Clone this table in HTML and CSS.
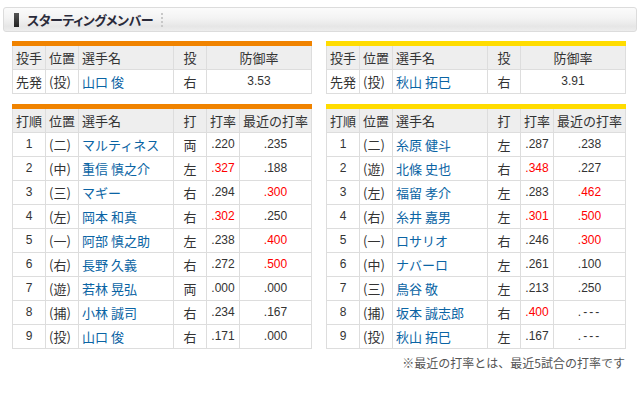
FILE: index.html
```html
<!DOCTYPE html>
<html lang="ja">
<head>
<meta charset="utf-8">
<title>スターティングメンバー</title>
<link rel="stylesheet" href="styles.css">
</head>
<body>
<div class="page">
  <div class="title-bar">
    <span class="mark"></span>
    <h2 class="title">スターティングメンバー</h2>
    <span class="sep"></span>
  </div>

  <div class="teams">
    <div class="team team-home">
      <table class="grid pitcher">
        <colgroup><col class="c1"><col class="c2"><col class="c3"><col class="c4"><col></colgroup>
        <tr class="head"><th class="l">投手</th><th class="l">位置</th><th class="l">選手名</th><th>投</th><th>防御率</th></tr>
        <tr><td class="l">先発</td><td class="l">(投)</td><td class="l"><a>山口 俊</a></td><td class="jp">右</td><td class="num">3.53</td></tr>
      </table>
      <table class="grid order">
        <colgroup><col class="c1"><col class="c2"><col class="c3"><col class="c4"><col class="c5"><col></colgroup>
        <tr class="head"><th class="l">打順</th><th class="l">位置</th><th class="l">選手名</th><th>打</th><th>打率</th><th>最近の打率</th></tr>
        <tr><td class="num">1</td><td class="l">(二)</td><td class="l"><a>マルティネス</a></td><td class="jp">両</td><td class="num">.220</td><td class="num">.235</td></tr>
        <tr><td class="num">2</td><td class="l">(中)</td><td class="l"><a>重信 慎之介</a></td><td class="jp">左</td><td class="num hot">.327</td><td class="num">.188</td></tr>
        <tr><td class="num">3</td><td class="l">(三)</td><td class="l"><a>マギー</a></td><td class="jp">右</td><td class="num">.294</td><td class="num hot">.300</td></tr>
        <tr><td class="num">4</td><td class="l">(左)</td><td class="l"><a>岡本 和真</a></td><td class="jp">右</td><td class="num hot">.302</td><td class="num">.250</td></tr>
        <tr><td class="num">5</td><td class="l">(一)</td><td class="l"><a>阿部 慎之助</a></td><td class="jp">左</td><td class="num">.238</td><td class="num hot">.400</td></tr>
        <tr><td class="num">6</td><td class="l">(右)</td><td class="l"><a>長野 久義</a></td><td class="jp">右</td><td class="num">.272</td><td class="num hot">.500</td></tr>
        <tr><td class="num">7</td><td class="l">(遊)</td><td class="l"><a>若林 晃弘</a></td><td class="jp">両</td><td class="num">.000</td><td class="num">.000</td></tr>
        <tr><td class="num">8</td><td class="l">(捕)</td><td class="l"><a>小林 誠司</a></td><td class="jp">右</td><td class="num">.234</td><td class="num">.167</td></tr>
        <tr><td class="num">9</td><td class="l">(投)</td><td class="l"><a>山口 俊</a></td><td class="jp">右</td><td class="num">.171</td><td class="num">.000</td></tr>
      </table>
    </div>

    <div class="team team-away">
      <table class="grid pitcher">
        <colgroup><col class="c1"><col class="c2"><col class="c3"><col class="c4"><col></colgroup>
        <tr class="head"><th class="l">投手</th><th class="l">位置</th><th class="l">選手名</th><th>投</th><th>防御率</th></tr>
        <tr><td class="l">先発</td><td class="l">(投)</td><td class="l"><a>秋山 拓巳</a></td><td class="jp">右</td><td class="num">3.91</td></tr>
      </table>
      <table class="grid order">
        <colgroup><col class="c1"><col class="c2"><col class="c3"><col class="c4"><col class="c5"><col></colgroup>
        <tr class="head"><th class="l">打順</th><th class="l">位置</th><th class="l">選手名</th><th>打</th><th>打率</th><th>最近の打率</th></tr>
        <tr><td class="num">1</td><td class="l">(二)</td><td class="l"><a>糸原 健斗</a></td><td class="jp">左</td><td class="num">.287</td><td class="num">.238</td></tr>
        <tr><td class="num">2</td><td class="l">(遊)</td><td class="l"><a>北條 史也</a></td><td class="jp">右</td><td class="num hot">.348</td><td class="num">.227</td></tr>
        <tr><td class="num">3</td><td class="l">(左)</td><td class="l"><a>福留 孝介</a></td><td class="jp">左</td><td class="num">.283</td><td class="num hot">.462</td></tr>
        <tr><td class="num">4</td><td class="l">(右)</td><td class="l"><a>糸井 嘉男</a></td><td class="jp">左</td><td class="num hot">.301</td><td class="num hot">.500</td></tr>
        <tr><td class="num">5</td><td class="l">(一)</td><td class="l"><a>ロサリオ</a></td><td class="jp">右</td><td class="num">.246</td><td class="num hot">.300</td></tr>
        <tr><td class="num">6</td><td class="l">(中)</td><td class="l"><a>ナバーロ</a></td><td class="jp">左</td><td class="num">.261</td><td class="num">.100</td></tr>
        <tr><td class="num">7</td><td class="l">(三)</td><td class="l"><a>鳥谷 敬</a></td><td class="jp">左</td><td class="num">.213</td><td class="num">.250</td></tr>
        <tr><td class="num">8</td><td class="l">(捕)</td><td class="l"><a>坂本 誠志郎</a></td><td class="jp">右</td><td class="num hot">.400</td><td class="num dash">.---</td></tr>
        <tr><td class="num">9</td><td class="l">(投)</td><td class="l"><a>秋山 拓巳</a></td><td class="jp">左</td><td class="num">.167</td><td class="num dash">.---</td></tr>
      </table>
    </div>
  </div>

  <p class="note">※最近の打率とは、最近5試合の打率です</p>
</div>
</body>
</html>
```

FILE: styles.css
```css
html, body {
  margin: 0;
  padding: 0;
  background: #fff;
}

body {
  font-family: "Noto Sans CJK JP", "Noto Sans", sans-serif;
  color: #333;
}

.page {
  width: 634px;
  padding: 7px 0 0 3px;
}

/* ---- title bar ---- */
.title-bar {
  display: flex;
  align-items: center;
  height: 23px;
  border: 1px solid #dcdcdc;
  border-radius: 3px;
  background: linear-gradient(#fbfbfb 0%, #f3f3f3 45%, #e6e6e6 80%, #ededed 100%);
  padding-left: 10px;
}

.mark {
  width: 5px;
  height: 14px;
  background: linear-gradient(#555, #222);
}

.title {
  margin: 0 0 0 8px;
  font-size: 13px;
  font-weight: bold;
  line-height: 23px;
  color: #2a2a3a;
  letter-spacing: -0.5px;
  font-feature-settings: "palt";
}

.sep {
  margin-left: 8px;
  height: 14px;
  border-left: 2px dotted #c8c8c8;
}

/* ---- tables ---- */
.teams {
  display: grid;
  grid-template-columns: 300px 300px;
  column-gap: 14px;
  margin: 9px 0 0 9px;
}

.team {
  display: flex;
  flex-direction: column;
  gap: 10px;
}

.grid {
  width: 300px;
  table-layout: fixed;
  border-collapse: collapse;
  font-size: 13px;
}

.team-home .grid { border-top: 5px solid #f08300; }
.team-away .grid { border-top: 5px solid #ffdc00; }

.grid col.c1,
.grid col.c2,
.grid col.c4,
.grid col.c5 { width: 33px; }
.grid col.c3 { width: 95px; }

.grid th,
.grid td {
  border: 1px solid #dddddd;
  padding: 0 3px;
  height: 23px;
  line-height: 23px;
  text-align: center;
  white-space: nowrap;
  overflow: hidden;
  font-weight: normal;
}

.grid tr:first-child th { border-top: 0; }

.grid th {
  background: #eeeeee;
}

.grid .l { text-align: left; }

.grid .num {
  font-family: "Liberation Sans", "Noto Sans", sans-serif;
  font-size: 12px;
  color: #333;
}

.grid .dash { letter-spacing: 2px; }

.grid .hot { color: #ff0000; }

.grid a {
  color: #0a64a4;
  text-decoration: none;
}

/* ---- footnote ---- */
.note {
  width: 613px;
  margin: 5px 0 0 9px;
  text-align: right;
  font-size: 12px;
  line-height: 18px;
  color: #555;
}
```
